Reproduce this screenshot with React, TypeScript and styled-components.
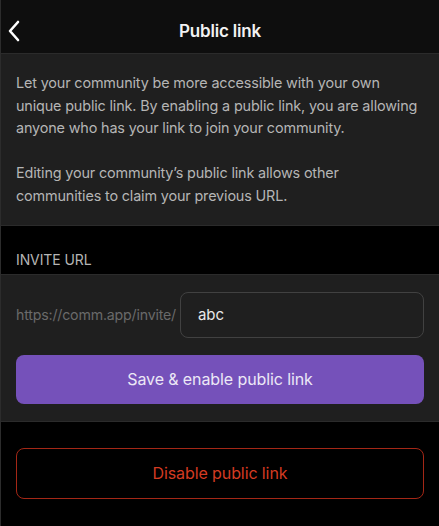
import React from 'react';
import styled, { createGlobalStyle } from 'styled-components';

const GlobalStyle = createGlobalStyle`
  html, body {
    margin: 0;
    padding: 0;
    background: #000000;
  }
  body {
    font-family: Inter, "Noto Sans", sans-serif;
    -webkit-font-smoothing: antialiased;
  }
`;

const Screen = styled.div`
  width: 439px;
  height: 526px;
  background: #000000;
  border-left: 1px solid #2c2c2c;
  box-sizing: border-box;
  display: flex;
  flex-direction: column;
  overflow: hidden;
`;

const Header = styled.div`
  height: 53px;
  background: #0e0e0e;
  border-bottom: 1px solid #2b2b2b;
  display: flex;
  align-items: center;
  justify-content: center;
  position: relative;
  flex-shrink: 0;
`;

const BackButton = styled.div`
  position: absolute;
  left: 6px;
  top: 20px;
  width: 14px;
  height: 22px;
`;

const Title = styled.div`
  color: #f2f2f2;
  font-size: 17px;
  font-weight: 600;
  letter-spacing: -0.2px;
  margin-top: 9px;
`;

const Section = styled.div<{ $dark?: boolean }>`
  background: ${(p) => (p.$dark ? '#000000' : '#1f1f1f')};
  border-bottom: 1px solid #2b2b2b;
  padding: 0 15px;
  flex-shrink: 0;
`;

const Paragraph = styled.p`
  margin: 0;
  color: #b5b5b5;
  font-size: 14.4px;
  line-height: 22.7px;
  letter-spacing: -0.15px;
`;

const DescSection = styled(Section)`
  padding-top: 18px;
  padding-bottom: 17px;
  display: flex;
  flex-direction: column;
  gap: 22px;
`;

const Label = styled.div`
  color: #b5b5b5;
  font-size: 14px;
  height: 48px;
  display: flex;
  align-items: flex-end;
  padding-bottom: 6px;
  box-sizing: border-box;
  letter-spacing: -0.1px;
`;

const FormSection = styled(Section)`
  padding-top: 17px;
  padding-bottom: 17px;
  display: flex;
  flex-direction: column;
  gap: 17px;
`;

const UrlRow = styled.div`
  display: flex;
  align-items: center;
  gap: 4px;
`;

const Prefix = styled.span`
  color: #6a6a6a;
  font-size: 14.2px;
  letter-spacing: -0.2px;
  white-space: nowrap;
`;

const Field = styled.div`
  flex: 1;
  height: 46px;
  border: 1px solid #414141;
  border-radius: 8px;
  box-sizing: border-box;
  display: flex;
  align-items: center;
  padding-left: 17px;
  color: #e8e8e8;
  font-size: 15px;
`;

const Button = styled.div<{ $variant: 'primary' | 'danger' }>`
  height: ${(p) => (p.$variant === 'primary' ? '49px' : '51px')};
  border-radius: 8px;
  box-sizing: border-box;
  display: flex;
  align-items: center;
  justify-content: center;
  font-size: 16px;
  letter-spacing: -0.1px;
  background: ${(p) => (p.$variant === 'primary' ? '#7551ba' : 'transparent')};
  color: ${(p) => (p.$variant === 'primary' ? '#ece8f6' : '#d43b22')};
  border: ${(p) => (p.$variant === 'primary' ? 'none' : '1px solid #a42716')};
`;

const Footer = styled.div`
  padding: 26px 15px 0;
`;

export default function App() {
  return (
    <>
      <GlobalStyle />
      <Screen>
        <Header>
          <BackButton>
            <svg width="14" height="22" viewBox="0 0 14 22">
              <path d="M11 2 L3 11 L11 20" stroke="#ffffff" strokeWidth="2.6" fill="none" strokeLinecap="round" strokeLinejoin="round" />
            </svg>
          </BackButton>
          <Title>Public link</Title>
        </Header>
        <DescSection>
          <Paragraph>
            Let your community be more accessible with your own unique public link. By enabling a public link, you are allowing
            anyone who has your link to join your community.
          </Paragraph>
          <Paragraph>
            Editing your community’s public link allows other communities to claim your previous URL.
          </Paragraph>
        </DescSection>
        <Section $dark>
          <Label>INVITE URL</Label>
        </Section>
        <FormSection>
          <UrlRow>
            <Prefix>https://comm.app/invite/</Prefix>
            <Field>abc</Field>
          </UrlRow>
          <Button $variant="primary">Save &amp; enable public link</Button>
        </FormSection>
        <Footer>
          <Button $variant="danger">Disable public link</Button>
        </Footer>
      </Screen>
    </>
  );
}
